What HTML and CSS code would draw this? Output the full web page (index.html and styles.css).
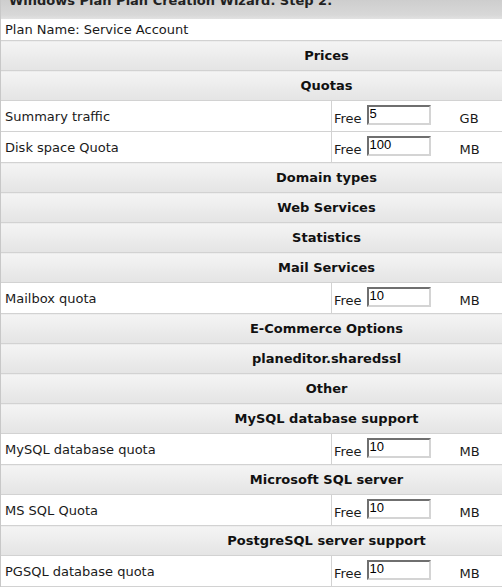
FILE: index.html
```html
<!DOCTYPE html>
<html>
<head>
<meta charset="utf-8">
<link rel="stylesheet" href="styles.css">
</head>
<body>
<div class="wizard">
  <div class="title">Windows Plan Plan Creation Wizard. Step 2.</div>
  <table class="plan">
    <tr class="name"><td colspan="2">Plan Name: Service Account</td></tr>
    <tr class="sect"><td colspan="2">Prices</td></tr>
    <tr class="sect"><td colspan="2">Quotas</td></tr>
    <tr class="data"><td class="lbl">Summary traffic</td><td class="val"><div class="field"><span class="free">Free</span><input class="num" value="5"><span class="unit">GB</span></div></td></tr>
    <tr class="data"><td class="lbl">Disk space Quota</td><td class="val"><div class="field"><span class="free">Free</span><input class="num" value="100"><span class="unit">MB</span></div></td></tr>
    <tr class="sect"><td colspan="2">Domain types</td></tr>
    <tr class="sect"><td colspan="2">Web Services</td></tr>
    <tr class="sect"><td colspan="2">Statistics</td></tr>
    <tr class="sect"><td colspan="2">Mail Services</td></tr>
    <tr class="data"><td class="lbl">Mailbox quota</td><td class="val"><div class="field"><span class="free">Free</span><input class="num" value="10"><span class="unit">MB</span></div></td></tr>
    <tr class="sect"><td colspan="2">E-Commerce Options</td></tr>
    <tr class="sect"><td colspan="2">planeditor.sharedssl</td></tr>
    <tr class="sect"><td colspan="2">Other</td></tr>
    <tr class="sect"><td colspan="2">MySQL database support</td></tr>
    <tr class="data"><td class="lbl">MySQL database quota</td><td class="val"><div class="field"><span class="free">Free</span><input class="num" value="10"><span class="unit">MB</span></div></td></tr>
    <tr class="sect"><td colspan="2">Microsoft SQL server</td></tr>
    <tr class="data"><td class="lbl">MS SQL Quota</td><td class="val"><div class="field"><span class="free">Free</span><input class="num" value="10"><span class="unit">MB</span></div></td></tr>
    <tr class="sect"><td colspan="2">PostgreSQL server support</td></tr>
    <tr class="data"><td class="lbl">PGSQL database quota</td><td class="val"><div class="field"><span class="free">Free</span><input class="num" value="10"><span class="unit">MB</span></div></td></tr>
  </table>
</div>
</body>
</html>
```
FILE: styles.css
```css
html, body {
  margin: 0;
  padding: 0;
  background: #ffffff;
  overflow: hidden;
}
body {
  font-family: "DejaVu Sans", Verdana, sans-serif;
  font-size: 13px;
  color: #1a1a1a;
}
.wizard {
  width: 651px;
  border-left: 1px solid #c8c8c8;
}
.title {
  box-sizing: border-box;
  height: 27px;
  margin-top: -8px;
  padding-top: 2px;
  padding-left: 8px;
  line-height: 14px;
  font-weight: bold;
  font-size: 13px;
  color: #222;
  background: linear-gradient(#c8c8c8, #d8d8d8 85%, #e2e2e2);
}
.plan {
  width: 651px;
  border-collapse: collapse;
}
.plan td {
  padding: 0;
  border-bottom: 1px solid #d2d2d2;
}
.name td {
  height: 21px;
  padding-left: 4px;
  background: #fff;
}
.sect td {
  height: 29px;
  text-align: center;
  font-weight: bold;
  font-size: 13px;
  color: #111;
  background: linear-gradient(#f4f4f4, #e4e4e4);
}
.data td {
  height: 30px;
  background: #fff;
}
.lbl {
  width: 326px;
  padding-left: 4px !important;
  border-right: 1px solid #d2d2d2;
  vertical-align: middle;
}
.val {
  vertical-align: top;
}
.field {
  display: flex;
  align-items: flex-start;
  height: 30px;
  padding-left: 2px;
  line-height: 15px;
}
.free {
  margin-top: 10px;
  margin-right: 5px;
}
.num {
  box-sizing: border-box;
  width: 64px;
  height: 20px;
  margin: 4px 0 0 0;
  padding: 0 1px 3px 1px;
  border: 2px solid;
  border-color: #6f6f6f #d4d4d4 #d4d4d4 #6f6f6f;
  font-family: "Liberation Sans", Arial, sans-serif;
  font-size: 13px;
  color: #000;
  outline: none;
}
.unit {
  margin-top: 10px;
  margin-left: 29px;
}
```
